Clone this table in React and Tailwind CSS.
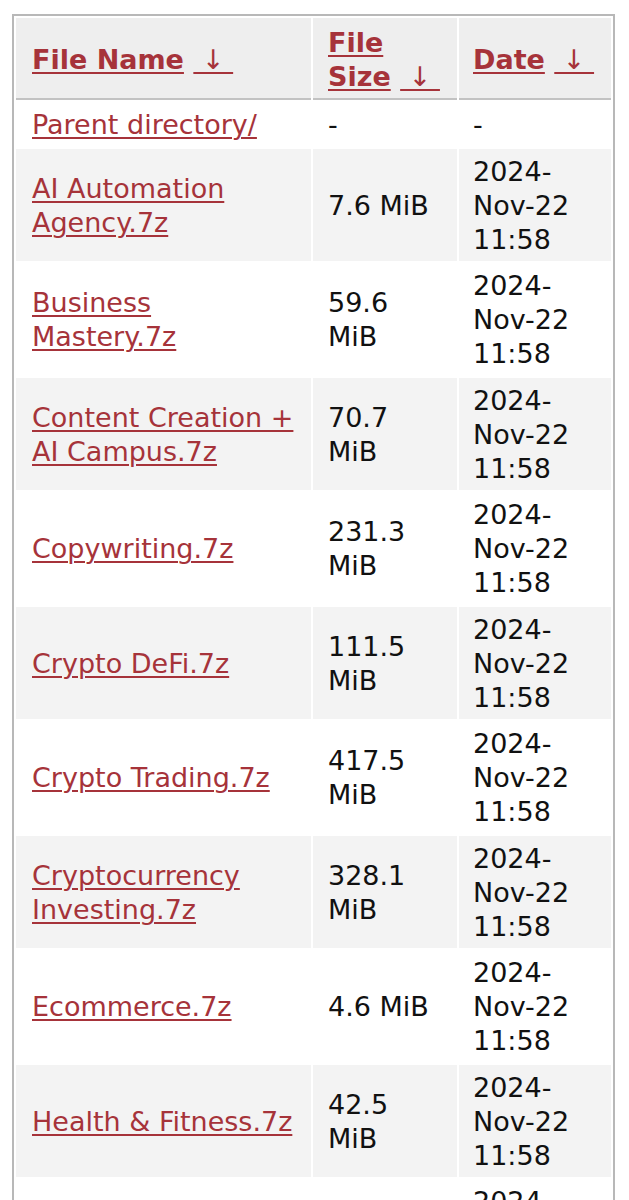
import React from "react";

const rows = [
  ["Parent directory/", "-", "-"],
  ["AI Automation Agency.7z", "7.6 MiB", "2024-Nov-22 11:58"],
  ["Business Mastery.7z", "59.6 MiB", "2024-Nov-22 11:58"],
  ["Content Creation + AI Campus.7z", "70.7 MiB", "2024-Nov-22 11:58"],
  ["Copywriting.7z", "231.3 MiB", "2024-Nov-22 11:58"],
  ["Crypto DeFi.7z", "111.5 MiB", "2024-Nov-22 11:58"],
  ["Crypto Trading.7z", "417.5 MiB", "2024-Nov-22 11:58"],
  ["Cryptocurrency Investing.7z", "328.1 MiB", "2024-Nov-22 11:58"],
  ["Ecommerce.7z", "4.6 MiB", "2024-Nov-22 11:58"],
  ["Health & Fitness.7z", "42.5 MiB", "2024-Nov-22 11:58"],
  ["Hustler's Campus.7z", "95.2 MiB", "2024-Nov-22 11:58"],
];

const linkCls = "text-[#a6333a] underline decoration-[1.5px] underline-offset-[3px]";

function Head({ label }) {
  return (
    <>
      <a href="#" className={linkCls}>{label}</a>{" "}
      <a href="#" className={linkCls + " font-normal"}>{"\u00a0↓\u00a0"}</a>
    </>
  );
}

export default function App() {
  return (
    <div className="bg-white min-h-[1200px] pt-[14px] pl-[12px] font-['DejaVu_Sans',Verdana,sans-serif] text-[27px] leading-[34px] text-[#111]">
      <table className="table-fixed w-[603px] border-separate border-spacing-[2px] border-2 border-[#b8b8b8]">
        <thead>
          <tr>
            <th className="w-[295px] bg-[#eeeeee] border-b-2 border-[#c2c2c2] pl-[16px] pr-[10px] pt-[8px] pb-[4px] text-left font-bold align-middle">
              <Head label="File Name" />
            </th>
            <th className="w-[144px] bg-[#eeeeee] border-b-2 border-[#c2c2c2] pl-[15px] pr-[13px] pt-[8px] pb-[4px] text-left font-bold align-middle">
              <Head label="File Size" />
            </th>
            <th className="w-[152px] bg-[#eeeeee] border-b-2 border-[#c2c2c2] pl-[14px] pr-[10px] pt-[8px] pb-[4px] text-left font-bold align-middle">
              <Head label="Date" />
            </th>
          </tr>
        </thead>
        <tbody>
          {rows.map((r, i) => (
            <tr key={i} className={i % 2 === 1 ? "bg-[#f3f3f3]" : "bg-white"}>
              <td className="pl-[16px] pr-[10px] pt-[6.25px] pb-[4.25px] align-middle">
                <a href="#" className={linkCls}>{r[0]}</a>
              </td>
              <td className="pl-[15px] pr-[13px] pt-[6.25px] pb-[4.25px] align-middle">{r[1]}</td>
              <td className="pl-[14px] pr-[10px] pt-[6.25px] pb-[4.25px] align-middle">{r[2]}</td>
            </tr>
          ))}
        </tbody>
      </table>
    </div>
  );
}
